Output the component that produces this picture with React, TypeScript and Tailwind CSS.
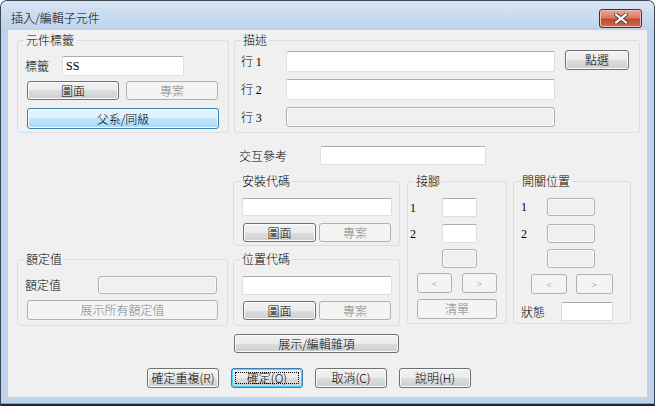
import type { ReactNode } from 'react';

// ─── Win7 style dialog: 插入/編輯子元件 ───────────────────────────────────────

type Kind = 'normal' | 'disabled' | 'hot' | 'default';

const btnKinds: Record<Kind, string> = {
  normal:
    'border-[#707070] text-black bg-[linear-gradient(#f2f2f2,#ebebeb_50%,#dddddd_50%,#cfcfcf)] shadow-[inset_0_0_0_1px_#fbfbfb]',
  disabled: 'border-[#adb2b5] text-[#838383] bg-[#f4f4f4]',
  hot:
    'border-[#3c7fb1] text-black bg-[linear-gradient(#eaf6fd,#d9f0fc_50%,#bee6fd_50%,#a7d9f5)] shadow-[inset_0_0_0_1px_#f4fbfe]',
  default:
    'border-[#3c7fb1] text-black bg-[linear-gradient(#f2f2f2,#ebebeb_50%,#dddddd_50%,#cfcfcf)] shadow-[inset_0_0_0_1px_#48d4ff]',
};

// PMingLiU-ish latin: serif digits / letters
const serif = "font-['Liberation_Serif','Noto_Sans_CJK_TC',serif] font-normal";

function Btn({
  children,
  kind = 'normal',
  className = '',
}: {
  children?: ReactNode;
  kind?: Kind;
  className?: string;
}) {
  return (
    <div
      className={`relative flex items-center justify-center rounded-[3px] border leading-none ${btnKinds[kind]} ${className}`}
    >
      {kind === 'default' && (
        <div className="absolute inset-[3px] border border-dotted border-black" />
      )}
      <span className="relative">{children}</span>
    </div>
  );
}

function Field({ className = '', children }: { className?: string; children?: ReactNode }) {
  return (
    <div
      className={`flex items-center rounded-[2px] border border-[#dbdfe6] border-t-[#abadb3] bg-white pl-[3px] leading-none ${className}`}
    >
      {children}
    </div>
  );
}

function Dead({ className = '' }: { className?: string }) {
  return (
    <div
      className={`rounded-[3px] border border-[#adb2b5] bg-[#f0f0f0] shadow-[inset_0_0_0_1px_#fcfcfc] ${className}`}
    />
  );
}

function Group({
  label,
  className = '',
  children,
}: {
  label: string;
  className?: string;
  children?: ReactNode;
}) {
  return (
    <div className={`relative shrink-0 rounded-[3px] border border-[#d5dfe5] ${className}`}>
      <span className="absolute left-[6px] -top-[8px] bg-[#f0f0f0] px-[2px] leading-[14px]">
        {label}
      </span>
      {children}
    </div>
  );
}

function CloseButton() {
  return (
    <div className="mt-[8px] flex h-[19px] w-[43px] items-center justify-center rounded-[3px] border border-[#6b2318] bg-[linear-gradient(#e9a997,#d77b64_45%,#c4472c_55%,#d26e52)] shadow-[inset_0_0_0_1px_#f0bcae]">
      <svg width="14" height="11" viewBox="0 0 14 11">
        <path d="M2 1.5 L12 9.5 M12 1.5 L2 9.5" stroke="#4a4a4a" strokeWidth="4" strokeLinecap="square" />
        <path d="M2 1.5 L12 9.5 M12 1.5 L2 9.5" stroke="#ffffff" strokeWidth="2" strokeLinecap="square" />
      </svg>
    </div>
  );
}

export default function App() {
  return (
    <div className="flex h-[406px] w-[655px] flex-col overflow-hidden rounded-t-[7px] border-x border-t border-[#3e4853] bg-[#bcd3eb] text-[12px] font-light text-black font-['Noto_Sans_CJK_TC','Liberation_Sans',sans-serif]">
      {/* title bar */}
      <div className="flex h-[29px] shrink-0 items-start justify-between bg-[linear-gradient(#d7e5f4,#bdd3eb)] pl-[10px] pr-[12px]">
        <span className="mt-[9px] leading-[16px]">插入/編輯子元件</span>
        <CloseButton />
      </div>

      {/* client area */}
      <div className="mx-[7px] flex h-[367px] shrink-0 flex-col bg-[#f0f0f0] pl-[9px]">
        {/* row 1 */}
        <div className="mt-[10px] flex gap-[5px]">
          <Group label="元件標籤" className="h-[93px] w-[212px]">
            <div className="flex flex-col pl-[9px] pt-[15px]">
              <div className="flex h-[20px] items-center">
                <span className="-ml-[2px] w-[37px]">標籤</span>
                <Field className={`h-[20px] w-[122px] ${serif}`}>SS</Field>
              </div>
              <div className="mt-[5px] flex gap-[7px]">
                <Btn className="h-[19px] w-[92px]">圖面</Btn>
                <Btn kind="disabled" className="h-[19px] w-[92px]">
                  專案
                </Btn>
              </div>
              <Btn kind="hot" className="mt-[8px] h-[21px] w-[192px]">
                父系/同級
              </Btn>
            </div>
          </Group>

          <Group label="描述" className="h-[93px] w-[406px]">
            <div className="flex pl-[6px] pt-[10px]">
              <div className="flex flex-col gap-[7px]">
                <div className="flex h-[21px] items-center">
                  <span className="w-[45px]">
                    行 <span className={serif}>1</span>
                  </span>
                  <Field className="h-[21px] w-[269px]" />
                </div>
                <div className="flex h-[21px] items-center">
                  <span className="w-[45px]">
                    行 <span className={serif}>2</span>
                  </span>
                  <Field className="h-[21px] w-[269px]" />
                </div>
                <div className="flex h-[20px] items-center">
                  <span className="w-[45px]">
                    行 <span className={serif}>3</span>
                  </span>
                  <Dead className="h-[20px] w-[269px]" />
                </div>
              </div>
              <Btn className="-mt-px ml-[10px] h-[20px] w-[64px]">點選</Btn>
            </div>
          </Group>
        </div>

        {/* row 2 */}
        <div className="mt-[13px] flex items-end gap-[5px]">
          <Group label="額定值" className="h-[67px] w-[211px]">
            <div className="flex flex-col pl-[9px] pt-[16px]">
              <div className="flex h-[18px] items-center">
                <span className="-ml-[2px] w-[73px]">額定值</span>
                <Dead className="h-[18px] w-[119px]" />
              </div>
              <Btn kind="disabled" className="mt-[6px] h-[20px] w-[191px]">
                展示所有額定值
              </Btn>
            </div>
          </Group>

          <div className="flex flex-col">
            <div className="flex h-[19px] items-center pl-[6px]">
              <span className="w-[81px]">交互參考</span>
              <Field className="h-[19px] w-[166px]" />
            </div>

            <div className="mt-[16px] flex items-start">
              <div className="flex w-[167px] flex-col gap-[13px]">
                <Group label="安裝代碼" className="h-[65px] w-[167px]">
                  <div className="flex flex-col pl-[8px] pt-[16px]">
                    <Field className="h-[18px] w-[150px]" />
                    <div className="ml-px mt-[7px] flex gap-[3px]">
                      <Btn className="h-[19px] w-[73px]">圖面</Btn>
                      <Btn kind="disabled" className="h-[19px] w-[72px]">
                        專案
                      </Btn>
                    </div>
                  </div>
                </Group>
                <Group label="位置代碼" className="h-[67px] w-[167px]">
                  <div className="flex flex-col pl-[8px] pt-[16px]">
                    <Field className="h-[19px] w-[150px]" />
                    <div className="ml-px mt-[6px] flex gap-[3px]">
                      <Btn className="h-[19px] w-[73px]">圖面</Btn>
                      <Btn kind="disabled" className="h-[19px] w-[72px]">
                        專案
                      </Btn>
                    </div>
                  </div>
                </Group>
              </div>

              <Group label="接腳" className="ml-[7px] h-[143px] w-[100px]">
                <div className="flex flex-col pl-[2px] pt-[16px]">
                  <div className="flex h-[19px] items-center">
                    <span className={`w-[32px] ${serif}`}>1</span>
                    <Field className="h-[19px] w-[35px]" />
                  </div>
                  <div className="mt-[7px] flex h-[19px] items-center">
                    <span className={`w-[32px] ${serif}`}>2</span>
                    <Field className="h-[19px] w-[35px]" />
                  </div>
                  <Dead className="ml-[32px] mt-[6px] h-[19px] w-[35px]" />
                  <div className="ml-[7px] mt-[5px] flex gap-[10px]">
                    <Btn kind="disabled" className="h-[20px] w-[35px] text-[9px]">
                      &lt;
                    </Btn>
                    <Btn kind="disabled" className="h-[20px] w-[35px] text-[9px]">
                      &gt;
                    </Btn>
                  </div>
                  <Btn kind="disabled" className="ml-[7px] mt-[6px] h-[20px] w-[80px]">
                    清單
                  </Btn>
                </div>
              </Group>

              <Group label="開關位置" className="ml-[6px] h-[143px] w-[118px]">
                <div className="flex flex-col pl-[7px] pt-[16px]">
                  <div className="flex h-[18px] items-center">
                    <span className={`w-[26px] ${serif}`}>1</span>
                    <Dead className="h-[18px] w-[48px]" />
                  </div>
                  <div className="mt-[8px] flex h-[19px] items-center">
                    <span className={`w-[26px] ${serif}`}>2</span>
                    <Dead className="h-[19px] w-[48px]" />
                  </div>
                  <Dead className="ml-[26px] mt-[6px] h-[19px] w-[48px]" />
                  <div className="ml-[10px] mt-[6px] flex gap-[9px]">
                    <Btn kind="disabled" className="h-[20px] w-[36px] text-[9px]">
                      &lt;
                    </Btn>
                    <Btn kind="disabled" className="h-[20px] w-[37px] text-[9px]">
                      &gt;
                    </Btn>
                  </div>
                  <div className="mt-[8px] flex h-[19px] items-center">
                    <span className="w-[40px]">狀態</span>
                    <Field className="h-[19px] w-[52px]" />
                  </div>
                </div>
              </Group>
            </div>
          </div>
        </div>

        {/* row 3 */}
        <Btn className="ml-[217px] mt-[8px] h-[19px] w-[165px]">展示/編輯雜項</Btn>

        {/* dialog buttons */}
        <div className="ml-[130px] mt-[15px] flex gap-[12px]">
          <Btn className="h-[20px] w-[72px]">確定重複(R)</Btn>
          <Btn kind="default" className="h-[20px] w-[72px]">
            確定(O)
          </Btn>
          <Btn className="h-[20px] w-[72px]">取消(C)</Btn>
          <Btn className="h-[20px] w-[72px]">說明(H)</Btn>
        </div>
      </div>

      <div className="h-[6px] shrink-0" />
      <div className="h-px shrink-0 bg-[#34c5dc]" />
      <div className="h-[2px] shrink-0 bg-[#1d2830]" />
    </div>
  );
}
